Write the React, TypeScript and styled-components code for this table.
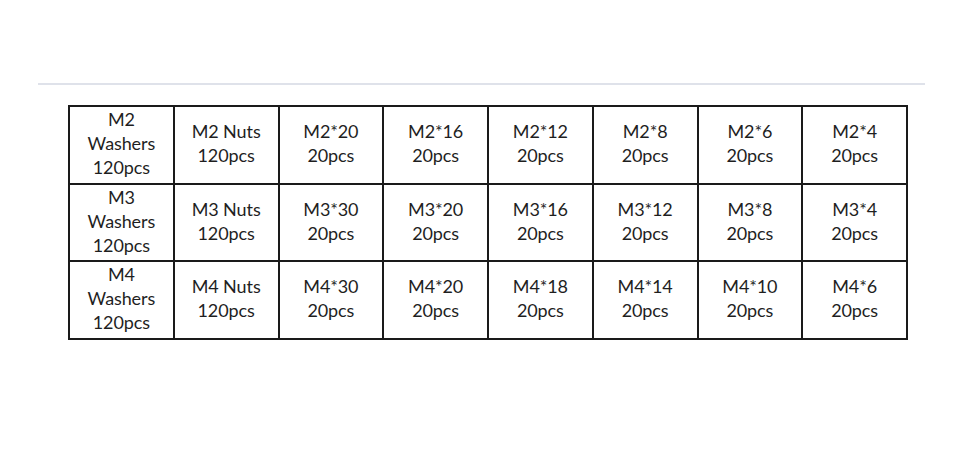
import React from "react";
import styled, { createGlobalStyle } from "styled-components";

const Global = createGlobalStyle`
  html, body { margin: 0; padding: 0; background: #fff; }
  body { font-family: Lato, "Open Sans", sans-serif; }
`;

const Page = styled.div`
  width: 968px;
  height: 466px;
  padding-top: 83px;
  box-sizing: border-box;
`;

const Rule = styled.div`
  margin-left: 38px;
  width: 887px;
  height: 2px;
  background: #dfe2ea;
`;

const Table = styled.div`
  margin-top: 20px;
  margin-left: 68px;
  width: 840px;
  display: grid;
  grid-template-columns: repeat(8, 1fr);
  grid-auto-rows: 77.5px;
  border-top: 2px solid #1a1a1a;
  border-left: 2px solid #1a1a1a;
  box-sizing: border-box;
`;

const Cell = styled.div`
  border-right: 2px solid #1a1a1a;
  border-bottom: 2px solid #1a1a1a;
  display: flex;
  flex-direction: column;
  align-items: center;
  justify-content: center;
  text-align: center;
  font-size: 18px;
  line-height: 24px;
  color: #1f1f1f;
  padding-bottom: 3px;
  letter-spacing: -0.1px;
`;

const rows: string[][][] = [
  [["M2", "Washers", "120pcs"], ["M2 Nuts", "120pcs"], ["M2*20", "20pcs"], ["M2*16", "20pcs"], ["M2*12", "20pcs"], ["M2*8", "20pcs"], ["M2*6", "20pcs"], ["M2*4", "20pcs"]],
  [["M3", "Washers", "120pcs"], ["M3 Nuts", "120pcs"], ["M3*30", "20pcs"], ["M3*20", "20pcs"], ["M3*16", "20pcs"], ["M3*12", "20pcs"], ["M3*8", "20pcs"], ["M3*4", "20pcs"]],
  [["M4", "Washers", "120pcs"], ["M4 Nuts", "120pcs"], ["M4*30", "20pcs"], ["M4*20", "20pcs"], ["M4*18", "20pcs"], ["M4*14", "20pcs"], ["M4*10", "20pcs"], ["M4*6", "20pcs"]],
];

export default function App() {
  return (
    <Page>
      <Global />
      <Rule />
      <Table>
        {rows.flat().map((lines, i) => (
          <Cell key={i}>
            {lines.map((l, j) => (
              <div key={j}>{l}</div>
            ))}
          </Cell>
        ))}
      </Table>
    </Page>
  );
}
